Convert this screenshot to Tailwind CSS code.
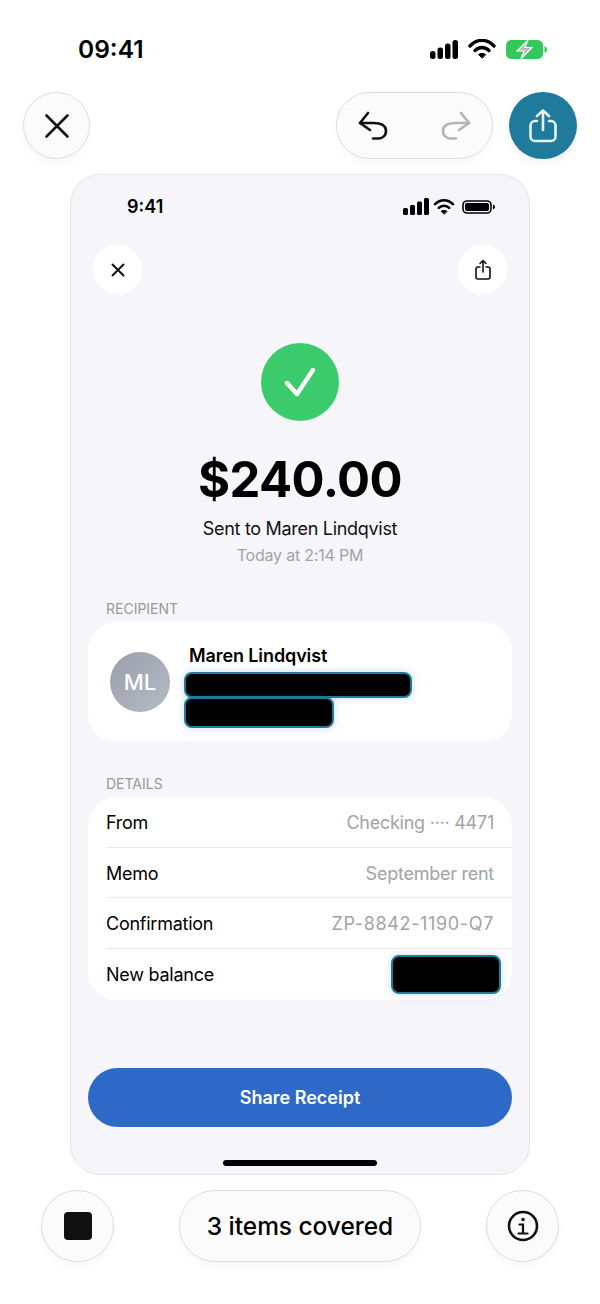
<!DOCTYPE html>
<html lang="en">
<head>
  <meta charset="UTF-8">
  <meta name="viewport" content="width=device-width, initial-scale=1.0">
  <title>Receipt markup</title>
  <script src="https://cdn.jsdelivr.net/npm/@tailwindcss/browser@4"></script>
</head>
<body class="bg-white font-['Inter',sans-serif] text-black">
  <div class="w-[600px] h-[1304px] overflow-hidden flex flex-col">

    <!-- outer status bar -->
    <div class="h-[92px] shrink-0 flex items-start justify-between pl-[78px] pr-[53px] pt-[33px]">
      <span class="text-[24.5px] leading-[32px] font-semibold">09:41</span>
      <div class="flex items-center gap-[10px] pt-[6px]">
        <svg width="28" height="19" viewBox="0 0 28 19" fill="#000"><rect x="0" y="11" width="5.500" height="8" rx="2.500"/><rect x="7.500" y="7.500" width="5.500" height="11.500" rx="2.500"/><rect x="15" y="3.500" width="5.500" height="15.500" rx="2.500"/><rect x="22.500" y="0" width="5.500" height="19" rx="2.500"/></svg>
        <svg width="28" height="20" viewBox="0 0 28 20" fill="none" stroke="#000" stroke-width="3.400" stroke-linecap="round"><path d="M2 7C9-.5 19-.5 26 7"/><path d="M7 11.500c4-4 10-4 14 0"/><path d="M14 19l-3.500-3.500c2-1.500 5-1.500 7 0z" fill="#000" stroke-width="1"/></svg>
        <svg width="41" height="19" viewBox="0 0 41 19"><rect x="0" y="0" width="37" height="19" rx="5.500" fill="#34c759"/><path d="M38.500 6c1.500.5 2.500 2 2.500 3.500s-1 3-2.500 3.500z" fill="#34c759"/><path d="M22 0 11 11h7l-3 8 11-11.500h-7z" fill="#b5bdb6" stroke="#fff" stroke-width="1.200"/></svg>
      </div>
    </div>

    <!-- editor toolbar -->
    <div class="h-[67px] shrink-0 flex items-center pl-[23px] pr-[23px]">
      <button class="w-[67px] h-[67px] rounded-full bg-[#fbfbfb] border border-[#dcdcdc] shadow-[0_4px_10px_rgba(0,0,0,0.03)] flex items-center justify-center">
        <svg width="26" height="26" viewBox="0 0 26 26" fill="none" stroke="#111" stroke-width="2.600" stroke-linecap="round"><path d="M2.500 2.500l21 21M23.500 2.500l-21 21"/></svg>
      </button>
      <div class="ml-auto w-[157px] h-[67px] rounded-full bg-[#fbfbfb] border border-[#dcdcdc] shadow-[0_4px_10px_rgba(0,0,0,0.03)] flex items-center justify-between pl-[21px] pr-[21px]">
        <svg width="30" height="30" viewBox="0 0 30 30" fill="none" stroke="#111" stroke-width="2.600" stroke-linecap="round" stroke-linejoin="round"><path d="M10 2 2 12l10 7"/><path d="M2 12h14c6 0 12 2 12 8 0 5-4 7.500-8 7.500h-5"/></svg>
        <svg width="30" height="30" viewBox="0 0 30 30" fill="none" stroke="#b4b4b4" stroke-width="2.600" stroke-linecap="round" stroke-linejoin="round"><path d="M20 2l8 10-10 7"/><path d="M28 12H14C8 12 2 14 2 20c0 5 4 7.500 8 7.500h5"/></svg>
      </div>
      <button class="ml-[16px] w-[68px] h-[67px] rounded-full bg-[#1f7a9c] shadow-[0_4px_10px_rgba(0,0,0,0.05)] flex items-center justify-center">
        <svg width="28" height="34" viewBox="0 0 28 34" fill="none" stroke="#e8f4f8" stroke-width="2.600" stroke-linecap="round" stroke-linejoin="round"><path d="M14 21V2M8 7l6-5.500L20 7"/><path d="M8 12H6c-2.500 0-4.500 2-4.500 4.500v11C1.500 30 3.500 32 6 32h16c2.500 0 4.500-2 4.500-4.500v-11c0-2.500-2-4.500-4.500-4.500h-2"/></svg>
      </button>
    </div>

    <!-- phone card -->
    <div class="mt-[15px] mx-[70px] w-[460px] h-[1001px] shrink-0 rounded-[30px] bg-[#f5f5fa] border border-[#e6e6ea] flex flex-col">
      <div class="h-[70px] shrink-0 flex items-start justify-between pl-[56px] pr-[34px] pt-[20px]">
        <span class="text-[18px] leading-[24px] font-semibold">9:41</span>
        <div class="flex items-center pt-[3px]">
          <svg width="26" height="17" viewBox="0 0 26 17" fill="#000"><rect x="0" y="10" width="5" height="7" rx="1.500"/><rect x="7" y="7" width="5" height="10" rx="1.500"/><rect x="14" y="3.500" width="5" height="13.500" rx="1.500"/><rect x="21" y="0" width="5" height="17" rx="1.500"/></svg>
          <svg width="22" height="17" viewBox="0 0 23 18" fill="none" stroke="#000" stroke-width="2.800" stroke-linecap="round" class="ml-[4px]"><path d="M2 6.500c5.500-5.500 13.500-5.500 19 0"/><path d="M6 10.500c3-3 8-3 11 0"/><path d="M11.500 17l-3-3c1.500-1.200 4.500-1.200 6 0z" fill="#000" stroke-width="1"/></svg>
          <svg width="33" height="14" viewBox="0 0 33 14" class="ml-[7px]"><rect x="1" y="1" width="28" height="12" rx="4" fill="none" stroke="#000" stroke-width="1.600"/><rect x="3" y="3" width="24" height="8" rx="2" fill="#000"/><path d="M31 4.500c1.200.4 2 1.400 2 2.500s-.8 2.100-2 2.500z" fill="#000"/></svg>
        </div>
      </div>

      <div class="shrink-0 flex justify-between pl-[22px] pr-[22px]">
        <button class="w-[49px] h-[49px] rounded-full bg-white flex items-center justify-center">
          <svg width="14" height="14" viewBox="0 0 14 14" fill="none" stroke="#111" stroke-width="2" stroke-linecap="round"><path d="M1.500 1.500l11 11M12.500 1.500l-11 11"/></svg>
        </button>
        <button class="w-[49px] h-[49px] rounded-full bg-white flex items-center justify-center">
          <svg width="16" height="21" viewBox="0 0 16 21" fill="none" stroke="#111" stroke-width="1.600" stroke-linecap="round" stroke-linejoin="round"><path d="M8 13V1.500M5 4.500l3-3 3 3"/><path d="M5 8H3c-1 0-2 1-2 2v8c0 1 1 2 2 2h10c1 0 2-1 2-2v-8c0-1-1-2-2-2h-2"/></svg>
        </button>
      </div>

      <div class="mt-[49px] flex flex-col items-center">
        <div class="w-[78px] h-[78px] rounded-full bg-[#3ccb6c] flex items-center justify-center">
          <svg width="32" height="30" viewBox="0 0 32 30" fill="none" stroke="#fff" stroke-width="4.400" stroke-linecap="round" stroke-linejoin="round"><path d="M3 16l10 11L29 3"/></svg>
        </div>
        <div class="mt-[27px] text-[49px] leading-[64px] font-bold tracking-[-0.55px]">$240.00</div>
        <div class="mt-[4px] text-[18px] leading-[26px] text-[#111] tracking-[-0.3px]">Sent to Maren Lindqvist</div>
        <div class="text-[16px] leading-[26px] text-[#a2a2a8] tracking-[-0.2px]">Today at 2:14 PM</div>
      </div>

      <div class="mt-[31px] px-[17px]">
        <div class="pl-[18px] text-[14px] leading-[20px] text-[#98989e]">RECIPIENT</div>
        <div class="mt-[3px] h-[120px] rounded-[28px] bg-white flex items-center pl-[22px]">
          <div class="w-[60px] h-[60px] rounded-full bg-gradient-to-br from-[#9a9fab] to-[#b4bbc6] text-white text-[22px] font-medium flex items-center justify-center">ML</div>
          <div class="ml-[14px] self-start pt-[22px] flex flex-col">
            <div class="pl-[5px] text-[18px] leading-[24px] font-semibold tracking-[-0.1px]">Maren Lindqvist</div>
            <div class="mt-[4px] w-[228px] h-[26px] rounded-[8px] bg-black border-2 border-[#1f7a9c] shadow-[0_0_8px_rgba(31,122,156,0.25)]"></div>
            <div class="mt-[-1px] w-[150px] h-[31px] rounded-[8px] bg-black border-2 border-[#1f7a9c] shadow-[0_0_8px_rgba(31,122,156,0.25)]"></div>
          </div>
        </div>
      </div>

      <div class="mt-[32px] px-[17px]">
        <div class="pl-[18px] text-[14px] leading-[20px] text-[#98989e]">DETAILS</div>
        <div class="mt-[3px] h-[203px] rounded-[28px] bg-white flex flex-col pl-[18px] text-[18px] tracking-[-0.25px]">
          <div class="h-[51px] pt-[1px] flex items-center justify-between pr-[18px] border-b border-[#ececee]"><span>From</span><span class="text-[#a2a2a8]">Checking ···· 4471</span></div>
          <div class="h-[50px] pt-[1px] flex items-center justify-between pr-[18px] border-b border-[#ececee]"><span>Memo</span><span class="text-[#a2a2a8]">September rent</span></div>
          <div class="h-[51px] pt-[1px] flex items-center justify-between pr-[18px] border-b border-[#ececee]"><span>Confirmation</span><span class="text-[#a2a2a8] tracking-[0.65px]">ZP-8842-1190-Q7</span></div>
          <div class="h-[51px] flex items-center justify-between pr-[11px]"><span>New balance</span><div class="w-[110px] h-[39px] rounded-[8px] bg-black border-2 border-[#1f7a9c] shadow-[0_0_8px_rgba(31,122,156,0.25)]"></div></div>
        </div>
      </div>

      <div class="mt-[68px] px-[17px]">
        <button class="w-full h-[59px] rounded-full bg-[#2f69c7] text-white text-[18px] font-semibold">Share Receipt</button>
      </div>
      <div class="mt-[33px] mx-auto w-[154px] h-[6px] rounded-full bg-black"></div>
    </div>

    <!-- bottom toolbar -->
    <div class="mt-[15px] h-[72px] shrink-0 flex items-center justify-between px-[41px]">
      <button class="w-[73px] h-[72px] rounded-full bg-[#fbfbfb] border border-[#dcdcdc] shadow-[0_4px_10px_rgba(0,0,0,0.03)] flex items-center justify-center">
        <div class="w-[28px] h-[28px] rounded-[4px] bg-[#111]"></div>
      </button>
      <div class="w-[242px] h-[72px] pt-[1px] rounded-full bg-[#fbfbfb] border border-[#dcdcdc] shadow-[0_4px_10px_rgba(0,0,0,0.03)] flex items-center justify-center text-[24.5px] font-medium tracking-[-0.05px]">3 items covered</div>
      <button class="w-[73px] h-[72px] rounded-full bg-[#fbfbfb] border border-[#dcdcdc] shadow-[0_4px_10px_rgba(0,0,0,0.03)] flex items-center justify-center">
        <svg width="32" height="32" viewBox="0 0 32 32" fill="none" stroke="#111" stroke-width="2.600" stroke-linecap="round"><circle cx="16" cy="16" r="14"/><circle cx="16" cy="9.500" r="1.800" fill="#111" stroke="none"/><path d="M12.500 14.500H16v8.500M11.500 23.500h9" stroke-width="2.200"/></svg>
      </button>
    </div>
  </div>
</body>
</html>
